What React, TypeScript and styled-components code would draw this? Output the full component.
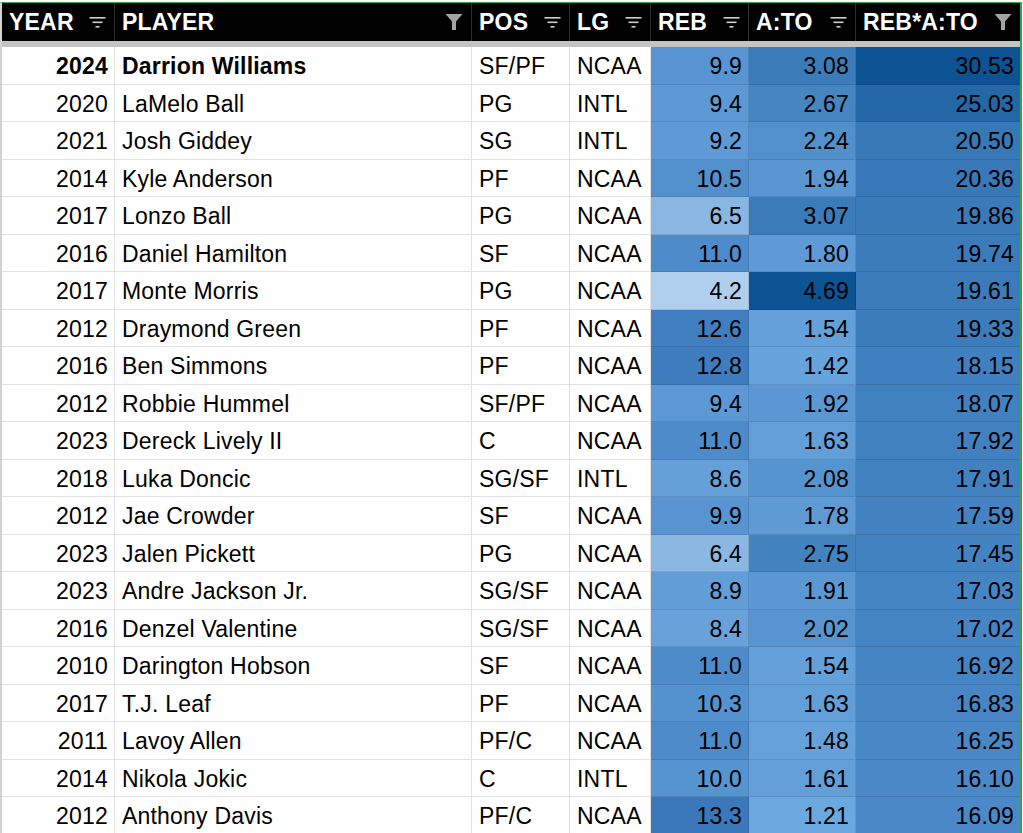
import React from "react";
import styled, { createGlobalStyle } from "styled-components";

const GlobalStyle = createGlobalStyle`
  html, body { margin: 0; padding: 0; background: #ffffff; }
  body { font-family: "Liberation Sans", Arial, sans-serif; }
`;

const COLS = "113px 357px 98px 81px 98px 107px 164px";

type Row = {
  year: number;
  player: string;
  pos: string;
  lg: string;
  reb: number;
  ato: number;
  prod: number;
  bold?: boolean;
};

const rows: Row[] = [
  { year: 2024, player: "Darrion Williams", pos: "SF/PF", lg: "NCAA", reb: 9.9, ato: 3.08, prod: 30.53, bold: true },
  { year: 2020, player: "LaMelo Ball", pos: "PG", lg: "INTL", reb: 9.4, ato: 2.67, prod: 25.03 },
  { year: 2021, player: "Josh Giddey", pos: "SG", lg: "INTL", reb: 9.2, ato: 2.24, prod: 20.5 },
  { year: 2014, player: "Kyle Anderson", pos: "PF", lg: "NCAA", reb: 10.5, ato: 1.94, prod: 20.36 },
  { year: 2017, player: "Lonzo Ball", pos: "PG", lg: "NCAA", reb: 6.5, ato: 3.07, prod: 19.86 },
  { year: 2016, player: "Daniel Hamilton", pos: "SF", lg: "NCAA", reb: 11.0, ato: 1.8, prod: 19.74 },
  { year: 2017, player: "Monte Morris", pos: "PG", lg: "NCAA", reb: 4.2, ato: 4.69, prod: 19.61 },
  { year: 2012, player: "Draymond Green", pos: "PF", lg: "NCAA", reb: 12.6, ato: 1.54, prod: 19.33 },
  { year: 2016, player: "Ben Simmons", pos: "PF", lg: "NCAA", reb: 12.8, ato: 1.42, prod: 18.15 },
  { year: 2012, player: "Robbie Hummel", pos: "SF/PF", lg: "NCAA", reb: 9.4, ato: 1.92, prod: 18.07 },
  { year: 2023, player: "Dereck Lively II", pos: "C", lg: "NCAA", reb: 11.0, ato: 1.63, prod: 17.92 },
  { year: 2018, player: "Luka Doncic", pos: "SG/SF", lg: "INTL", reb: 8.6, ato: 2.08, prod: 17.91 },
  { year: 2012, player: "Jae Crowder", pos: "SF", lg: "NCAA", reb: 9.9, ato: 1.78, prod: 17.59 },
  { year: 2023, player: "Jalen Pickett", pos: "PG", lg: "NCAA", reb: 6.4, ato: 2.75, prod: 17.45 },
  { year: 2023, player: "Andre Jackson Jr.", pos: "SG/SF", lg: "NCAA", reb: 8.9, ato: 1.91, prod: 17.03 },
  { year: 2016, player: "Denzel Valentine", pos: "SG/SF", lg: "NCAA", reb: 8.4, ato: 2.02, prod: 17.02 },
  { year: 2010, player: "Darington Hobson", pos: "SF", lg: "NCAA", reb: 11.0, ato: 1.54, prod: 16.92 },
  { year: 2017, player: "T.J. Leaf", pos: "PF", lg: "NCAA", reb: 10.3, ato: 1.63, prod: 16.83 },
  { year: 2011, player: "Lavoy Allen", pos: "PF/C", lg: "NCAA", reb: 11.0, ato: 1.48, prod: 16.25 },
  { year: 2014, player: "Nikola Jokic", pos: "C", lg: "INTL", reb: 10.0, ato: 1.61, prod: 16.1 },
  { year: 2012, player: "Anthony Davis", pos: "PF/C", lg: "NCAA", reb: 13.3, ato: 1.21, prod: 16.09 },
];

type Stop = [number, [number, number, number]];

const rebScale: Stop[] = [
  [4.2, [176, 206, 237]],
  [9.0, [95, 156, 215]],
  [13.3, [58, 120, 187]],
];
const atoScale: Stop[] = [
  [1.21, [108, 168, 224]],
  [1.95, [90, 151, 210]],
  [4.69, [12, 83, 148]],
];
const prodScale: Stop[] = [
  [16.09, [74, 136, 199]],
  [30.53, [13, 83, 147]],
];

function scaleColor(v: number, stops: Stop[]): string {
  let a = stops[0];
  let b = stops[stops.length - 1];
  for (let i = 0; i < stops.length - 1; i++) {
    if (v >= stops[i][0] && v <= stops[i + 1][0]) {
      a = stops[i];
      b = stops[i + 1];
      break;
    }
  }
  const t = b[0] === a[0] ? 0 : Math.max(0, Math.min(1, (v - a[0]) / (b[0] - a[0])));
  const c = a[1].map((x, i) => Math.round(x + (b[1][i] - x) * t));
  return `rgb(${c[0]}, ${c[1]}, ${c[2]})`;
}

const Page = styled.div`
  padding-top: 2px;
  width: 1023px;
  height: 833px;
  overflow: hidden;
  box-sizing: border-box;
`;

const Sheet = styled.div`
  width: 1022px;
  box-sizing: border-box;
  border-top: 1px solid #2ea84a;
  border-right: 2px solid #2ea84a;
  border-left: 2px solid #d2d2d2;
`;

const HeaderRow = styled.div`
  display: grid;
  grid-template-columns: ${COLS};
  height: 38px;
  background: #000000;
  border-bottom: 6px solid #c4c4c4;
`;

const HeadCell = styled.div`
  display: flex;
  align-items: center;
  justify-content: space-between;
  padding: 0 8px 0 7px;
  border-right: 1px solid #2e2e2e;
  color: #ffffff;
  font-weight: 700;
  font-size: 23px;
  letter-spacing: 0.2px;
  white-space: nowrap;
  &:last-child { border-right: none; }
`;

const IconBox = styled.span`
  display: inline-flex;
  width: 18px;
  height: 18px;
  align-items: center;
  justify-content: center;
  flex: none;
`;

const BodyRow = styled.div`
  display: grid;
  grid-template-columns: ${COLS};
  height: 37.5px;
`;

const Cell = styled.div<{ $align?: "left" | "right"; $bg?: string; $bold?: boolean }>`
  display: flex;
  align-items: center;
  justify-content: ${(p) => (p.$align === "right" ? "flex-end" : "flex-start")};
  padding: 3px 6px 0 7px;
  box-sizing: border-box;
  background: ${(p) => p.$bg ?? "#ffffff"};
  border-right: 1px solid ${(p) => (p.$bg ? "rgba(0,0,0,0.1)" : "#e2e2e2")};
  border-bottom: 1px solid ${(p) => (p.$bg ? "rgba(0,0,0,0.1)" : "#e2e2e2")};
  color: #000000;
  font-size: 23px;
  letter-spacing: 0.2px;
  font-weight: ${(p) => (p.$bold ? 700 : 400)};
  white-space: nowrap;
  overflow: hidden;
  &:last-child { border-right: none; }
`;

const SortIcon = () => (
  <IconBox>
    <svg width="17" height="13" viewBox="0 0 17 13">
      <rect x="0.5" y="1" width="16" height="1.6" fill="#cfcfcf" />
      <rect x="3.5" y="5.5" width="10" height="1.6" fill="#cfcfcf" />
      <rect x="6.5" y="10" width="4" height="1.6" fill="#cfcfcf" />
    </svg>
  </IconBox>
);

const FunnelIcon = () => (
  <IconBox>
    <svg width="18" height="18" viewBox="0 0 18 18">
      <path d="M0.5 1 H17.5 L11 8.5 V17 H7 V8.5 Z" fill="#a3a3a3" />
    </svg>
  </IconBox>
);

const headers: { label: string; filtered?: boolean }[] = [
  { label: "YEAR" },
  { label: "PLAYER", filtered: true },
  { label: "POS" },
  { label: "LG" },
  { label: "REB" },
  { label: "A:TO" },
  { label: "REB*A:TO", filtered: true },
];

export default function App() {
  return (
    <Page>
      <GlobalStyle />
      <Sheet>
        <HeaderRow>
          {headers.map((h) => (
            <HeadCell key={h.label}>
              <span>{h.label}</span>
              {h.filtered ? <FunnelIcon /> : <SortIcon />}
            </HeadCell>
          ))}
        </HeaderRow>
        {rows.map((r, i) => (
          <BodyRow key={i}>
            <Cell $align="right" $bold={r.bold}>{r.year}</Cell>
            <Cell $bold={r.bold}>{r.player}</Cell>
            <Cell>{r.pos}</Cell>
            <Cell>{r.lg}</Cell>
            <Cell $align="right" $bg={scaleColor(r.reb, rebScale)}>{r.reb.toFixed(1)}</Cell>
            <Cell $align="right" $bg={scaleColor(r.ato, atoScale)}>{r.ato.toFixed(2)}</Cell>
            <Cell $align="right" $bg={scaleColor(r.prod, prodScale)}>{r.prod.toFixed(2)}</Cell>
          </BodyRow>
        ))}
      </Sheet>
    </Page>
  );
}
